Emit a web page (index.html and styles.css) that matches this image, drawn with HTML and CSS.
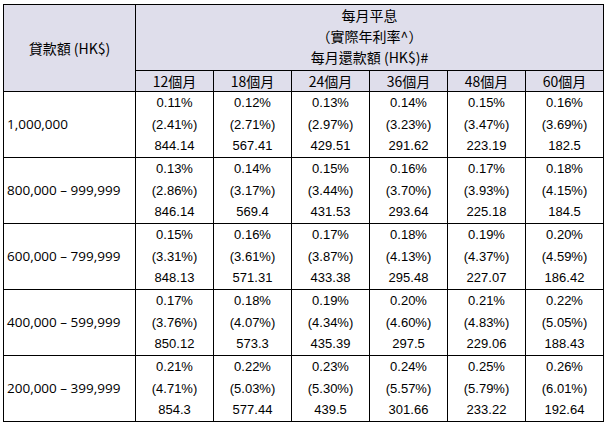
FILE: index.html
```html
<!DOCTYPE html>
<html lang="zh-Hant">
<head>
<meta charset="utf-8">
<link rel="stylesheet" href="styles.css">
</head>
<body>
<table class="rates">
  <thead>
    <tr class="head-top">
      <th class="amount-head" rowspan="2">貸款額 (HK$)</th>
      <th class="title-head" colspan="6">每月平息<br>（實際年利率^）<br>每月還款額 (HK$)#</th>
    </tr>
    <tr class="months">
      <th>12個月</th><th>18個月</th><th>24個月</th><th>36個月</th><th>48個月</th><th>60個月</th>
    </tr>
  </thead>
  <tbody>
    <tr>
      <td class="amount">1,000,000</td>
      <td>0.11%<br>(2.41%)<br>844.14</td>
      <td>0.12%<br>(2.71%)<br>567.41</td>
      <td>0.13%<br>(2.97%)<br>429.51</td>
      <td>0.14%<br>(3.23%)<br>291.62</td>
      <td>0.15%<br>(3.47%)<br>223.19</td>
      <td>0.16%<br>(3.69%)<br>182.5</td>
    </tr>
    <tr>
      <td class="amount">800,000 – 999,999</td>
      <td>0.13%<br>(2.86%)<br>846.14</td>
      <td>0.14%<br>(3.17%)<br>569.4</td>
      <td>0.15%<br>(3.44%)<br>431.53</td>
      <td>0.16%<br>(3.70%)<br>293.64</td>
      <td>0.17%<br>(3.93%)<br>225.18</td>
      <td>0.18%<br>(4.15%)<br>184.5</td>
    </tr>
    <tr>
      <td class="amount">600,000 – 799,999</td>
      <td>0.15%<br>(3.31%)<br>848.13</td>
      <td>0.16%<br>(3.61%)<br>571.31</td>
      <td>0.17%<br>(3.87%)<br>433.38</td>
      <td>0.18%<br>(4.13%)<br>295.48</td>
      <td>0.19%<br>(4.37%)<br>227.07</td>
      <td>0.20%<br>(4.59%)<br>186.42</td>
    </tr>
    <tr>
      <td class="amount">400,000 – 599,999</td>
      <td>0.17%<br>(3.76%)<br>850.12</td>
      <td>0.18%<br>(4.07%)<br>573.3</td>
      <td>0.19%<br>(4.34%)<br>435.39</td>
      <td>0.20%<br>(4.60%)<br>297.5</td>
      <td>0.21%<br>(4.83%)<br>229.06</td>
      <td>0.22%<br>(5.05%)<br>188.43</td>
    </tr>
    <tr>
      <td class="amount">200,000 – 399,999</td>
      <td>0.21%<br>(4.71%)<br>854.3</td>
      <td>0.22%<br>(5.03%)<br>577.44</td>
      <td>0.23%<br>(5.30%)<br>439.5</td>
      <td>0.24%<br>(5.57%)<br>301.66</td>
      <td>0.25%<br>(5.79%)<br>233.22</td>
      <td>0.26%<br>(6.01%)<br>192.64</td>
    </tr>
  </tbody>
</table>
</body>
</html>
```

FILE: styles.css
```css
html, body {
  margin: 0;
  padding: 0;
  background: #ffffff;
}

body {
  padding: 4px 0 0 3px;
}

.rates {
  border-collapse: collapse;
  table-layout: fixed;
  width: 601px;
  color: #000;
  font-family: "Liberation Sans", Arial, sans-serif;
  font-size: 13px;
}

.rates th,
.rates td {
  border: 1px solid #000;
  padding: 0;
  text-align: center;
  vertical-align: middle;
  font-weight: normal;
}

.rates th {
  background: #dfdeeb;
  font-family: "Noto Sans CJK TC", sans-serif;
}

.amount-head {
  width: 131px;
  font-size: 14px;
}

.rates .title-head {
  height: 63px;
  padding-bottom: 2px;
  line-height: 21px;
  font-size: 14px;
}

.months th {
  height: 20px;
  line-height: 20px;
  font-size: 14px;
}

.rates td {
  height: 65px;
  line-height: 21.5px;
}

.rates td.amount {
  text-align: left;
  padding-left: 3px;
  font-family: "Open Sans", "Noto Sans CJK TC", sans-serif;
  font-size: 13.5px;
}
```
